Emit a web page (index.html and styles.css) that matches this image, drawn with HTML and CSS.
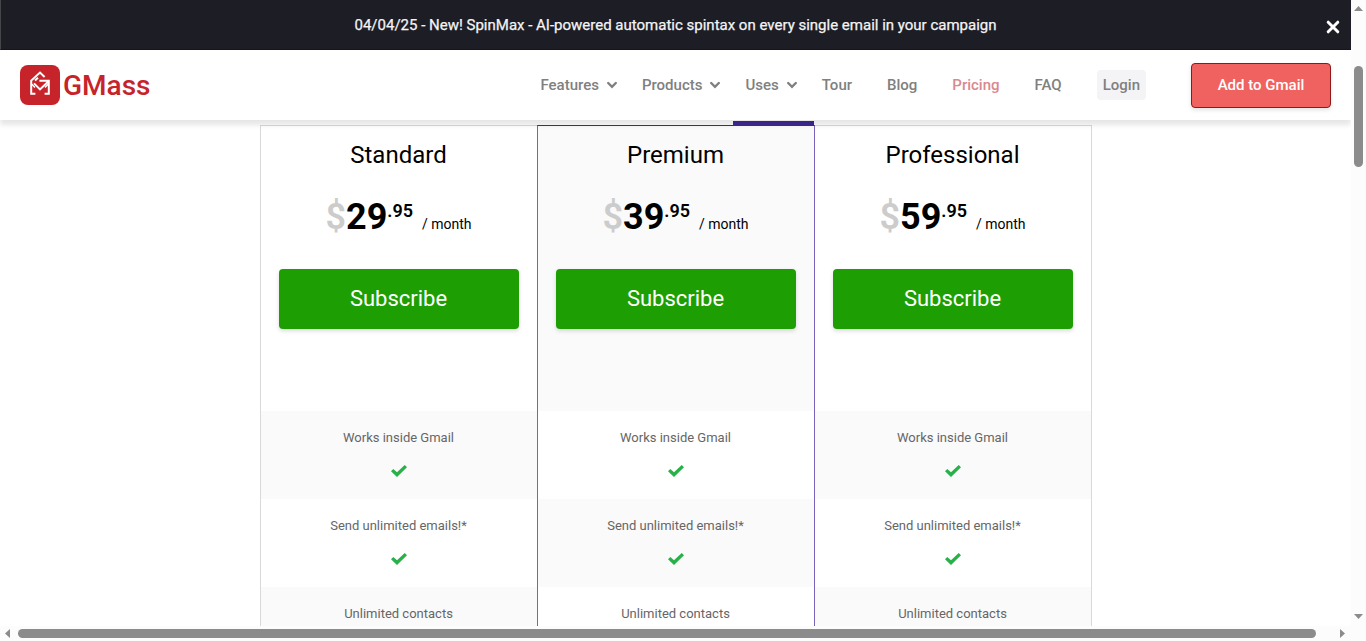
FILE: index.html
```html
<!DOCTYPE html>
<html lang="en">
<head>
    <meta charset="UTF-8">
    <meta name="viewport" content="width=device-width, initial-scale=1.0">
    <title>GMass Pricing</title>
    <link rel="stylesheet" href="styles.css">
</head>
<body>

    <!-- shared icons -->
    <svg class="icon-defs" width="0" height="0" aria-hidden="true">
        <symbol id="chevron" viewBox="0 0 10 8">
            <path d="M1.2 2 L5 5.8 L8.8 2" fill="none" stroke="currentColor" stroke-width="2.4" stroke-linecap="round"/>
        </symbol>
        <symbol id="check" viewBox="0 0 16 12">
            <path d="M0 6.3 L2.3 4 L6 7.3 L13.7 0 L16 2.3 L6 12 Z" fill="currentColor"/>
        </symbol>
    </svg>

    <div class="window">
        <div class="page">

            <div class="banner">
                <p>04/04/25 - New! SpinMax - AI-powered automatic spintax on every single email in your campaign</p>
                <button class="banner-close" aria-label="Close">
                    <svg width="14" height="14" viewBox="0 0 14 14">
                        <path d="M2.2 2.2 L11.8 11.8 M11.8 2.2 L2.2 11.8" stroke="currentColor" stroke-width="3" stroke-linecap="round"/>
                    </svg>
                </button>
            </div>

            <header class="header">
                <a href="#" class="logo">
                    <svg width="40" height="40" viewBox="0 0 40 40" aria-hidden="true">
                        <rect width="40" height="40" rx="8" fill="#c6232b"/>
                        <path d="M24.6 12 L20 7.6 L11.2 15.6 V28.8 H15.4 M24.6 28.8 H28.8 V15.8 H19.4 M28.6 16.2 L20 24.4 L14 18.4 M15 15.6 L18 12.8" fill="none" stroke="#fff" stroke-width="2"/>
                        <path d="M11.6 19 L15 22.4 M28.4 19 L25 22.4" fill="none" stroke="#fff" stroke-width="1.4"/>
                    </svg>
                    <span>GMass</span>
                </a>
                <nav class="nav">
                    <a href="#" class="has-menu">Features <svg width="10" height="8"><use href="#chevron"/></svg></a>
                    <a href="#" class="has-menu">Products <svg width="10" height="8"><use href="#chevron"/></svg></a>
                    <a href="#" class="has-menu">Uses <svg width="10" height="8"><use href="#chevron"/></svg></a>
                    <a href="#">Tour</a>
                    <a href="#">Blog</a>
                    <a href="#" class="active">Pricing</a>
                    <a href="#">FAQ</a>
                    <a href="#" class="login">Login</a>
                    <a href="#" class="add-button">Add to Gmail</a>
                </nav>
            </header>

            <main class="plans">
                <section class="plan">
                    <div class="plan-head">
                        <h2>Standard</h2>
                        <p class="price"><span class="dollar">$</span><b>29</b><span class="cents">.95</span><span class="period">/ month</span></p>
                        <button class="subscribe">Subscribe</button>
                    </div>
                    <ul class="features">
                        <li>Works inside Gmail <svg width="16" height="12"><use href="#check"/></svg></li>
                        <li>Send unlimited emails!* <svg width="16" height="12"><use href="#check"/></svg></li>
                        <li>Unlimited contacts <svg width="16" height="12"><use href="#check"/></svg></li>
                    </ul>
                </section>

                <section class="plan premium">
                    <div class="plan-tab"></div>
                    <div class="plan-head">
                        <h2>Premium</h2>
                        <p class="price"><span class="dollar">$</span><b>39</b><span class="cents">.95</span><span class="period">/ month</span></p>
                        <button class="subscribe">Subscribe</button>
                    </div>
                    <ul class="features">
                        <li>Works inside Gmail <svg width="16" height="12"><use href="#check"/></svg></li>
                        <li>Send unlimited emails!* <svg width="16" height="12"><use href="#check"/></svg></li>
                        <li>Unlimited contacts <svg width="16" height="12"><use href="#check"/></svg></li>
                    </ul>
                </section>

                <section class="plan">
                    <div class="plan-head">
                        <h2>Professional</h2>
                        <p class="price"><span class="dollar">$</span><b>59</b><span class="cents">.95</span><span class="period">/ month</span></p>
                        <button class="subscribe">Subscribe</button>
                    </div>
                    <ul class="features">
                        <li>Works inside Gmail <svg width="16" height="12"><use href="#check"/></svg></li>
                        <li>Send unlimited emails!* <svg width="16" height="12"><use href="#check"/></svg></li>
                        <li>Unlimited contacts <svg width="16" height="12"><use href="#check"/></svg></li>
                    </ul>
                </section>
            </main>
        </div>

        <!-- scrollbars -->
        <div class="scroll-y">
            <svg width="9" height="5" viewBox="0 0 9 5"><path d="M0 5 L4.5 0 L9 5 Z"/></svg>
            <div class="track"><div class="thumb"></div></div>
            <svg width="9" height="5" viewBox="0 0 9 5"><path d="M0 0 L4.5 5 L9 0 Z"/></svg>
        </div>
        <div class="scroll-x">
            <svg width="5" height="9" viewBox="0 0 5 9"><path d="M5 0 L0 4.5 L5 9 Z"/></svg>
            <div class="track"><div class="thumb"></div></div>
            <svg width="5" height="9" viewBox="0 0 5 9"><path d="M0 0 L5 4.5 L0 9 Z"/></svg>
        </div>
        <div class="scroll-corner"></div>
    </div>

</body>
</html>
```
FILE: styles.css
```css
* {
    box-sizing: border-box;
}

body {
    margin: 0;
    font-family: Roboto, "Liberation Sans", sans-serif;
    background-color: #fff;
    color: #000;
}

h2, p, ul {
    margin: 0;
    padding: 0;
}

a {
    text-decoration: none;
}

button {
    font-family: inherit;
    border: none;
    cursor: pointer;
}

.icon-defs {
    position: absolute;
}

.window {
    display: grid;
    grid-template-columns: 1fr 15px;
    grid-template-rows: 1fr 15px;
    height: 100vh;
}

.page {
    overflow: hidden;
    min-height: 0;
}

/* Top announcement */
.banner {
    display: flex;
    align-items: center;
    height: 50px;
    padding: 0 11px 0 24px;
    background-color: #1d1d26;
    border-left: 1px solid #45454c;
    border-bottom: 1px solid #15151c;
    color: #f4f4f4;
}

.banner p {
    flex: 1;
    text-align: center;
    font-size: 15px;
    font-weight: 400;
    -webkit-text-stroke: 0.25px #f4f4f4;
}

.banner-close {
    display: flex;
    padding: 4px 0 0;
    background: none;
    color: #fff;
}

/* Header */
.header {
    position: relative;
    z-index: 2;
    display: flex;
    justify-content: space-between;
    align-items: center;
    height: 70px;
    padding: 0 20px;
    background-color: #fff;
    box-shadow: 0 5px 5px rgba(0, 0, 0, 0.1);
}

.logo {
    display: flex;
    align-items: center;
    gap: 3px;
    color: #c6232b;
    font-size: 28px;
    font-weight: 500;
}

.nav {
    display: flex;
    align-items: center;
    gap: 35px;
    font-size: 15px;
    font-weight: 500;
}

.nav a {
    color: #808080;
}

.nav .has-menu {
    display: flex;
    align-items: center;
    gap: 8px;
    margin-right: -10px;
}

.nav .active {
    color: #d98890;
}

.nav .login {
    padding: 0 6px;
    line-height: 30px;
    border-radius: 4px;
    background-color: #f4f4f6;
}

.nav .add-button {
    width: 140px;
    margin-left: 10px;
    line-height: 43px;
    text-align: center;
    color: #fff;
    background-color: #f0625f;
    border: 1px solid #8c1a1c;
    border-radius: 4px;
    box-shadow: 0 2px 4px rgba(0, 0, 0, 0.12);
}

/* Pricing columns */
.plans {
    display: flex;
    max-width: 832px;
    margin: 5px auto 0;
}

.plan {
    position: relative;
    flex: 1;
    border: 1px solid #d9d9d9;
    border-width: 1px 0 0 1px;
}

.plan:last-child {
    border-left: none;
    border-right-width: 1px;
}

.premium {
    border: 1px solid #3f2893;
    border-right-color: #7a63bd;
    border-left-color: #7a63bd;
}

.plan-tab {
    position: absolute;
    right: 0;
    bottom: 100%;
    width: 81px;
    height: 5px;
    background-color: #3f2893;
}

.plan-head {
    display: flex;
    flex-direction: column;
    align-items: center;
    padding: 14px 17px 82px;
    text-align: center;
}

.premium .plan-head {
    background-color: #fafafa;
}

.plan-head h2 {
    font-size: 24px;
    font-weight: 400;
    line-height: 30px;
}

.price {
    display: flex;
    align-items: flex-start;
    margin: 29px 0 34px;
    font-size: 36px;
    font-weight: 600;
    line-height: 36px;
}

.price b {
    font-weight: 700;
}

.price .dollar {
    color: #ccc;
}

.price .cents {
    font-size: 18px;
    line-height: 24px;
}

.price .period {
    margin: 15px 0 0 9px;
    font-size: 14px;
    font-weight: 400;
    line-height: 20px;
}

.subscribe {
    width: 240px;
    height: 60px;
    padding: 0 0 2px;
    border-radius: 4px;
    background-color: #1d9f04;
    color: #fff;
    font-size: 22px;
    box-shadow: 0 2px 4px rgba(0, 0, 0, 0.15);
}

.features {
    list-style: none;
}

.features li {
    display: flex;
    flex-direction: column;
    align-items: center;
    gap: 17px;
    height: 88px;
    padding-top: 17px;
    font-size: 13px;
    line-height: 20px;
    color: #666;
}

.features li:nth-child(odd),
.premium .features li:nth-child(even) {
    background-color: #fafafa;
}

.premium .features li:nth-child(odd) {
    background-color: #fff;
}

.features svg {
    color: #28b148;
}

/* Scrollbars */
.scroll-y,
.scroll-x,
.scroll-corner {
    background-color: #fcfcfc;
}

.scroll-y,
.scroll-x {
    display: flex;
    align-items: center;
    fill: #8b8b8b;
}

.scroll-y {
    flex-direction: column;
    padding: 6px 0 7px;
}

.scroll-x {
    padding: 0 6px 0 5px;
}

.track {
    flex: 1;
}

.thumb {
    border-radius: 5px;
    background-color: #8b8b8b;
}

.scroll-y .thumb {
    width: 9px;
    height: 101px;
    margin-top: 55px;
}

.scroll-x .thumb {
    height: 9px;
    margin: 0 24px 0 8px;
}
```
